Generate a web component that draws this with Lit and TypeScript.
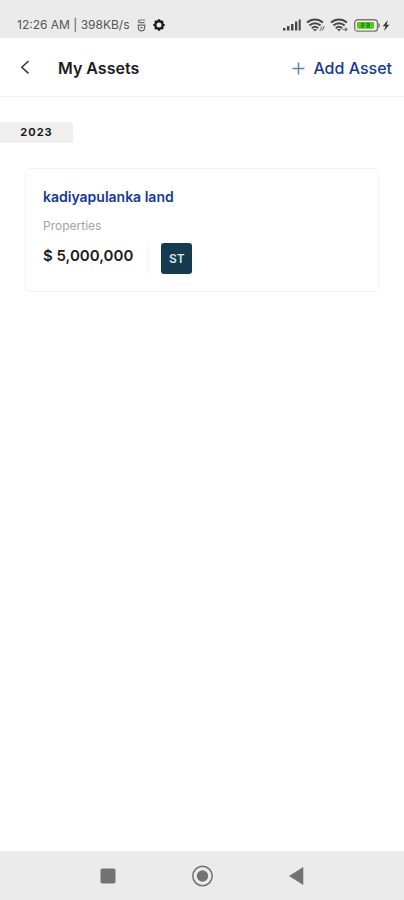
import { LitElement, html, svg, css } from "lit";
import { customElement, property } from "lit/decorators.js";

interface Asset {
  name: string;
  category: string;
  value: string;
  owner: string;
}

@customElement("status-bar")
class StatusBar extends LitElement {
  static styles = css`
    :host {
      display: flex;
      align-items: center;
      justify-content: space-between;
      height: 38px;
      padding: 12px 14px 0 17px;
      box-sizing: border-box;
      background: #ebebeb;
      color: #555;
      font-size: 12px;
      line-height: 16px;
    }
    .group {
      display: flex;
      align-items: center;
      gap: 5px;
      white-space: nowrap;
    }
    .info {
      gap: 7px;
    }
    svg {
      display: block;
    }
  `;

  private wifi(tail: unknown) {
    return html`<svg width="19" height="14" viewBox="0 0 19 14" fill="none" stroke="#484848" stroke-width="2">
      <path d="M1 4.6C5.6 .4 12.4 .4 17 4.6" />
      <path d="M3.4 7.5c3.2-3 8-3 11.200 0" />
      <path d="M5.8 10.200c2-1.800 4.400-1.800 6.400 0" />
      <path d="M7 11h4l-2 2.400z" fill="#484848" stroke="none" />
      ${tail}
    </svg>`;
  }

  render() {
    return html`
      <div class="group info">
        <span>12:26 AM | 398KB/s</span>
        <svg width="9" height="13" viewBox="0 0 9 13" fill="none" stroke="#6a6a6a" stroke-width="1.2">
          <path d="M8 1H3C.8 1 .8 3.600 3 3.600h4.600M0.600 6.100h7.800M1.400 6v3c0 3.800 6.200 3.800 6.200 0V6M3.400 8.700h2.200" />
        </svg>
        <svg width="12" height="12" viewBox="0 0 12 12" fill="none" stroke="#1c1c1c">
          <circle cx="6" cy="6" r="3.700" stroke-width="2.400" />
          <path d="M6 0.300v2M6 9.700v2M0.300 6h2M9.700 6h2M2 2l1.400 1.400M8.600 8.600L10 10M10 2L8.600 3.400M3.400 8.600L2 10" stroke-width="2.200" />
        </svg>
      </div>
      <div class="group">
        <svg width="18" height="12" viewBox="0 0 18 12" fill="#484848">
          <rect x="0" y="9" width="2.500" height="2.500" />
          <rect x="4" y="7" width="2.500" height="4.500" />
          <rect x="8" y="5" width="2.500" height="6.500" />
          <rect x="12" y="2.500" width="2.300" height="9" />
          <rect x="15.700" y="0.500" width="2" height="11" />
        </svg>
        ${this.wifi(svg`<path d="M13.800 13l2.400-4.500M16.200 12.500L18.400 8" stroke="#8a8a8a" stroke-width="1.300" />`)}
        ${this.wifi(svg`<path d="M12.500 11.500h4.500M15 9.800l2 1.700-2 1.600" stroke="#777" stroke-width="1.200" />`)}
        <svg width="36" height="13" viewBox="0 0 36 13">
          <rect x="0.700" y="0.700" width="22.800" height="11.400" rx="3.200" fill="#f1f8ec" stroke="#777" stroke-width="1.400" />
          <path d="M24.300 3.800v5.200q1.700-1 1.700-2.600t-1.700-2.600z" fill="#777" />
          <rect x="3" y="3" width="17" height="6.800" rx="1" fill="#58c91b" />
          <path d="M7 4.700h3v1.700H7.500v1.800H10M12.500 4.700h3v1.700H13v1.800h3" fill="none" stroke="#286a10" stroke-width="1" />
          <path d="M33.800 1L28.600 7.200h2.800L30 12l5.400-6.300h-2.700z" fill="#3c3c3c" />
        </svg>
      </div>
    `;
  }
}

@customElement("asset-card")
class AssetCard extends LitElement {
  @property({ attribute: false }) asset!: Asset;

  static styles = css`
    :host {
      display: block;
      margin: 25px 25px 0;
      padding: 18px 17px 17px;
      border: 1px solid #f3f3f3;
      border-radius: 5px;
      background: #fff;
    }
    .name {
      margin: 0;
      color: #143a94;
      font-size: 14px;
      line-height: 20px;
      font-weight: 600;
    }
    .category {
      margin: 10px 0 0;
      color: #a3a3a3;
      font-size: 12px;
      line-height: 18px;
    }
    .row {
      display: flex;
      align-items: center;
      margin-top: 8px;
    }
    .value {
      color: #1c1c1c;
      font-size: 15px;
      line-height: 24px;
      font-weight: 600;
      padding-bottom: 6px;
    }
    .owner {
      display: flex;
      margin-left: 15px;
      padding-left: 12px;
      border-left: 1px solid #f5f5f5;
    }
    .initials {
      width: 31px;
      border-radius: 3px;
      background: #163a50;
      color: #dfe6ea;
      font-size: 12px;
      line-height: 31px;
      font-weight: 600;
      text-align: center;
    }
  `;

  render() {
    const { name, category, value, owner } = this.asset;
    return html`
      <h3 class="name">${name}</h3>
      <p class="category">${category}</p>
      <div class="row">
        <span class="value">${value}</span>
        <span class="owner"><span class="initials">${owner}</span></span>
      </div>
    `;
  }
}

@customElement("nav-bar")
class NavBar extends LitElement {
  static styles = css`
    :host {
      display: flex;
      justify-content: center;
      gap: 70px;
      padding: 12px 0;
      background: #ebebeb;
    }
    button {
      display: block;
      width: 24px;
      height: 25px;
      padding: 0;
      border: 0;
      background: none;
    }
    svg {
      display: block;
    }
  `;

  render() {
    return html`
      <button aria-label="Recent apps">
        <svg width="24" height="25" viewBox="0 0 24 25">
          <rect x="4.500" y="5.500" width="15" height="15" rx="2" fill="#727272" />
        </svg>
      </button>
      <button aria-label="Home">
        <svg width="24" height="25" viewBox="0 0 24 25">
          <circle cx="12.500" cy="13" r="9.700" fill="none" stroke="#727272" stroke-width="1.500" />
          <circle cx="12.500" cy="13" r="5.700" fill="#727272" />
        </svg>
      </button>
      <button aria-label="Back">
        <svg width="24" height="25" viewBox="0 0 24 25">
          <path d="M19 4.500v17L5.500 13z" fill="#727272" stroke="#727272" stroke-width="0.600" stroke-linejoin="round" />
        </svg>
      </button>
    `;
  }
}

@customElement("app-root")
class AppRoot extends LitElement {
  private year = "2023";
  private assets: Asset[] = [
    { name: "kadiyapulanka land", category: "Properties", value: "$ 5,000,000", owner: "ST" },
  ];

  static styles = css`
    :host {
      display: flex;
      flex-direction: column;
      min-height: 100vh;
      background: #fff;
      font-family: Inter, "Noto Sans", sans-serif;
    }
    header {
      display: flex;
      align-items: center;
      height: 58px;
      padding: 0 12px 0 17px;
      border-bottom: 1px solid #f3f3f3;
    }
    button {
      display: flex;
      align-items: center;
      padding: 0;
      border: 0;
      background: none;
      font-family: inherit;
    }
    .back {
      width: 41px;
    }
    h1 {
      flex: 1;
      margin: 0;
      padding-top: 2px;
      color: #1c1c1c;
      font-size: 16px;
      line-height: 24px;
      font-weight: 600;
    }
    .add {
      gap: 8px;
      padding-top: 2px;
      color: #143a94;
      font-size: 16px;
      line-height: 24px;
      font-weight: 500;
    }
    main {
      flex: 1;
      padding-top: 25px;
    }
    .year {
      width: 73px;
      margin: 0;
      border-radius: 0 3px 3px 0;
      background: #efefef;
      color: #1c1c1c;
      font-size: 11px;
      line-height: 21px;
      font-weight: 700;
      letter-spacing: 1px;
      text-align: center;
    }
  `;

  render() {
    return html`
      <status-bar></status-bar>
      <header>
        <button class="back" aria-label="Back">
          <svg width="16" height="16" viewBox="0 0 16 16" fill="none" stroke="#333" stroke-width="1.500">
            <path d="M11.500 2L4.800 8.200l6.700 6.200" />
          </svg>
        </button>
        <h1>My Assets</h1>
        <button class="add">
          <svg width="13" height="13" viewBox="0 0 13 13" stroke="#5e7fbd" stroke-width="1.500">
            <path d="M6.500 0.500v12M0.500 6.500h12" />
          </svg>
          Add Asset
        </button>
      </header>
      <main>
        <h2 class="year">${this.year}</h2>
        ${this.assets.map((asset) => html`<asset-card .asset=${asset}></asset-card>`)}
      </main>
      <nav-bar></nav-bar>
    `;
  }
}
